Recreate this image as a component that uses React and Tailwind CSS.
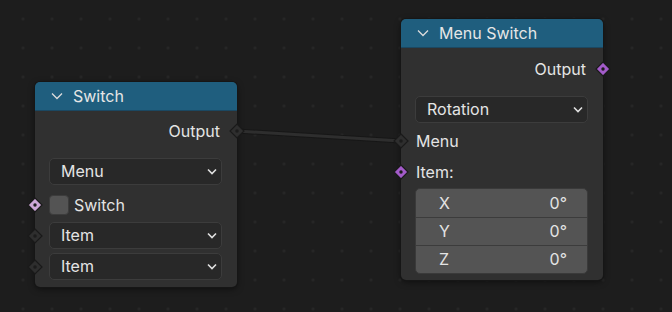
import React from 'react'

const font = { fontFamily: 'Inter, "Noto Sans", sans-serif' }

function Socket({ side, kind }) {
  const fill = kind === 'bool' ? '#cca6d6' : kind === 'rot' ? '#a35bc9' : '#2e2e2e'
  const pos = side === 'left' ? 'left-[-8px]' : 'right-[-8px]'
  return (
    <svg
      className={`absolute ${pos} top-1/2 -translate-y-1/2`}
      width="16"
      height="16"
      viewBox="0 0 16 16"
    >
      <path d="M8 1 L15 8 L8 15 L1 8 Z" fill={fill} stroke="#1a1a1a" strokeWidth="1.2" />
      <circle cx="8" cy="8" r="1.7" fill="#1c1c1c" />
    </svg>
  )
}

function HeaderChevron() {
  return (
    <svg width="12" height="8" viewBox="0 0 12 8" className="shrink-0">
      <path d="M1 1.5 L6 6.5 L11 1.5" fill="none" stroke="#dcdcdc" strokeWidth="1.3" />
    </svg>
  )
}

function DropChevron() {
  return (
    <svg width="10" height="7" viewBox="0 0 10 7" className="shrink-0">
      <path d="M1 1.5 L5 5.5 L9 1.5" fill="none" stroke="#e0e0e0" strokeWidth="1.6" />
    </svg>
  )
}

function Dropdown({ label }) {
  return (
    <div className="h-[27px] rounded-[5px] bg-[#282828] border border-[#3c3c3c] flex items-center justify-between pl-[11px] pr-[4px] text-[16px] text-[#e4e4e4]">
      <span className="-mt-[1px]">{label}</span>
      <DropChevron />
    </div>
  )
}

function Header({ title }) {
  return (
    <div className="h-[29px] bg-[#1f5e7e] rounded-t-[5px] border-b border-[#1b4862] flex items-center gap-[10px] pl-[16px] text-[16px] text-[#e6e6e6]">
      <HeaderChevron />
      <span>{title}</span>
    </div>
  )
}

export default function App() {
  return (
    <div
      style={font}
      className="relative w-[672px] h-[312px] overflow-hidden bg-[#1d1d1d] bg-[radial-gradient(circle,#282828_1.2px,transparent_1.6px)] bg-[size:29px_29px] bg-[position:8.5px_4.5px]"
    >
      <svg className="absolute left-0 top-0" width="672" height="312">
        <line x1="237" y1="131" x2="401" y2="141" stroke="#171717" strokeWidth="5" />
        <line x1="237" y1="131" x2="401" y2="141" stroke="#2e2e2e" strokeWidth="3" />
      </svg>

      {/* Switch node */}
      <div className="absolute left-[35px] top-[82px] w-[202px] rounded-[5px] bg-[#303030] shadow-[0_0_0_1px_#161616,0_2px_6px_rgba(0,0,0,0.5)]">
        <Header title="Switch" />
        <div className="relative mt-[8px] h-[24px] flex items-center justify-end pr-[17px] text-[16px] text-[#e4e4e4]">
          Output
          <Socket side="right" kind="dark" />
        </div>
        <div className="mt-[15px] ml-[14px] mr-[15px]">
          <Dropdown label="Menu" />
        </div>
        <div className="relative mt-[10px] h-[20px] flex items-center gap-[5px] pl-[14px] text-[16px] text-[#e4e4e4]">
          <Socket side="left" kind="bool" />
          <div className="w-[20px] h-[20px] rounded-[4px] bg-[#545454] border border-[#3c3c3c]" />
          <span className="-mt-[1px]">Switch</span>
        </div>
        <div className="relative mt-[7px] ml-[14px] mr-[15px]">
          <div className="absolute left-[-14px] top-0 h-full">
            <Socket side="left" kind="dark" />
          </div>
          <Dropdown label="Item" />
        </div>
        <div className="relative mt-[4px] ml-[14px] mr-[15px]">
          <div className="absolute left-[-14px] top-0 h-full">
            <Socket side="left" kind="dark" />
          </div>
          <Dropdown label="Item" />
        </div>
        <div className="h-[7px]" />
      </div>

      {/* Menu Switch node */}
      <div className="absolute left-[401px] top-[19px] w-[202px] rounded-[5px] bg-[#303030] shadow-[0_0_0_1px_#161616,0_2px_6px_rgba(0,0,0,0.5)]">
        <Header title="Menu Switch" />
        <div className="relative mt-[9px] h-[24px] flex items-center justify-end pr-[17px] text-[16px] text-[#e4e4e4]">
          Output
          <Socket side="right" kind="rot" />
        </div>
        <div className="mt-[15px] ml-[14px] mr-[15px]">
          <Dropdown label="Rotation" />
        </div>
        <div className="relative mt-[6px] h-[24px] flex items-center pl-[15px] text-[16px] text-[#e4e4e4]">
          <Socket side="left" kind="dark" />
          Menu
        </div>
        <div className="relative mt-[7px] h-[24px] flex items-center pl-[15px] text-[16px] text-[#e4e4e4]">
          <Socket side="left" kind="rot" />
          Item:
        </div>
        <div className="mt-[4px] ml-[14px] mr-[15px] rounded-[5px] bg-[#545454] border border-[#3a3a3a] overflow-hidden text-[16px] text-[#e4e4e4]">
          {['X', 'Y', 'Z'].map((axis, i) => (
            <div
              key={axis}
              className={`h-[28px] flex items-center justify-between pl-[23px] pr-[20px] ${i > 0 ? 'border-t border-[#3c3c3c]' : ''}`}
            >
              <span className="-mt-[1px]">{axis}</span>
              <span className="-mt-[1px]">0°</span>
            </div>
          ))}
        </div>
        <div className="h-[6px]" />
      </div>
    </div>
  )
}
